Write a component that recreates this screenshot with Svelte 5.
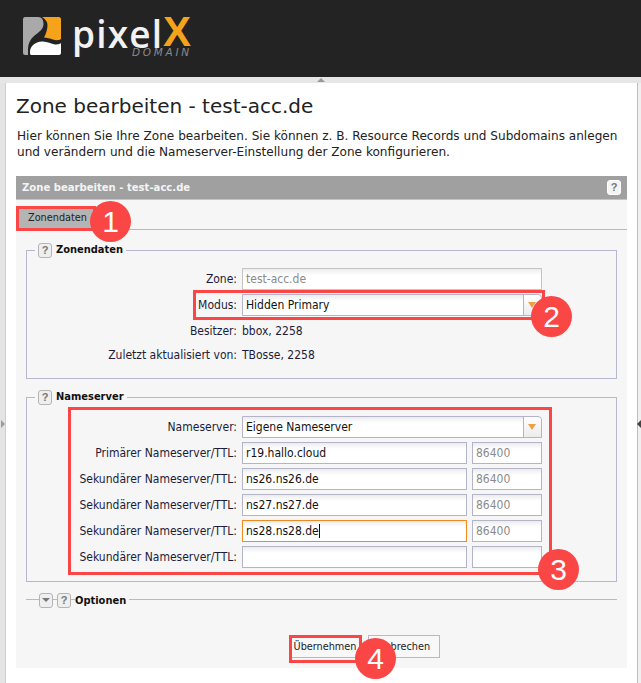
<script lang="ts">
  const secondary = [
    { host: 'ns26.ns26.de', ttl: '86400' },
    { host: 'ns27.ns27.de', ttl: '86400' },
    { host: 'ns28.ns28.de', ttl: '86400', focus: true },
    { host: '', ttl: '' }
  ];
</script>

<div class="page">
  <header class="topbar">
    <div class="logo">
      <svg class="logo-mark" width="38" height="38" viewBox="0 0 38 38" aria-hidden="true">
        <path d="M2 0H15C19 0 20.500 3 20.500 7C20.500 12 16 15 11 19C7 22.500 5 27 5 32V38H2C1 38 0 37 0 36V2C0 1 1 0 2 0Z" fill="#a9a9a9" />
        <path d="M19 0H36C37 0 38 1 38 2V22C36 23.500 33 23.500 30 22.500C27 21.500 24 20.500 21 20.500C23 17 24.500 12 24.500 8C24.500 4.500 22 2 19 0Z" fill="#f5a31a" />
        <path d="M8 38C7 37.500 7 36.500 7 35C7 29 12 25 19 24.500C24 24.200 28 27 32 27.500C34 27.700 36 27.200 38 26.200V36C38 37 37 38 36 38Z" fill="#ffffff" />
      </svg>
      <span class="logo-word">pixel</span>
      <span class="logo-x">X</span>
      <span class="logo-sub">DOMAIN</span>
    </div>
  </header>

  <div class="splitter"><i class="grip-top"></i></div>

  <div class="frame">
    <main class="content">
      <h1>Zone bearbeiten - test-acc.de</h1>
      <p class="intro">Hier können Sie Ihre Zone bearbeiten. Sie können z. B. Resource Records und Subdomains anlegen und verändern und die Nameserver-Einstellung der Zone konfigurieren.</p>

      <section class="panel">
        <div class="panel-head">
          <span>Zone bearbeiten - test-acc.de</span>
          <span class="help help-white">?</span>
        </div>
        <div class="panel-body">
          <div class="tabs"><span class="tab">Zonendaten</span></div>

          <fieldset class="group first">
            <legend><span class="help">?</span><b>Zonendaten</b></legend>
            <div class="row">
              <label>Zone:</label>
              <div class="field wide disabled">test-acc.de</div>
            </div>
            <div class="row">
              <label>Modus:</label>
              <div class="field wide select"><span>Hidden Primary</span><i class="arrow"></i></div>
            </div>
            <div class="row plain"><label>Besitzer:</label><span>bbox, 2258</span></div>
            <div class="row plain"><label>Zuletzt aktualisiert von:</label><span>TBosse, 2258</span></div>
          </fieldset>

          <fieldset class="group second">
            <legend><span class="help">?</span><b>Nameserver</b></legend>
            <div class="row">
              <label>Nameserver:</label>
              <div class="field wide select"><span>Eigene Nameserver</span><i class="arrow"></i></div>
            </div>
            <div class="row">
              <label>Primärer Nameserver/TTL:</label>
              <div class="field host">r19.hallo.cloud</div>
              <div class="field ttl">86400</div>
            </div>
            {#each secondary as ns}
              <div class="row">
                <label>Sekundärer Nameserver/TTL:</label>
                <div class="field host" class:focus={ns.focus}>{ns.host}{#if ns.focus}<i class="caret"></i>{/if}</div>
                <div class="field ttl">{ns.ttl}</div>
              </div>
            {/each}
          </fieldset>

          <div class="collapsed">
            <span class="help"><i class="down"></i></span>
            <span class="help">?</span>
            <b>Optionen</b>
          </div>

          <div class="actions">
            <button>Übernehmen</button>
            <button>Abbrechen</button>
          </div>
        </div>
      </section>
    </main>
  </div>

  <i class="grip left"></i>
  <i class="grip right"></i>

  <i class="mark m1"></i>
  <i class="mark m2"></i>
  <i class="mark m3"></i>
  <i class="mark m4"></i>
  <span class="badge b1">1</span>
  <span class="badge b2">2</span>
  <span class="badge b3">3</span>
  <span class="badge b4">4</span>
</div>

<style>
  :global(body) {
    background: #fff;
  }

  .page {
    position: relative;
    width: 641px;
    height: 683px;
    overflow: hidden;
    font-family: 'DejaVu Sans', sans-serif;
    color: #222;
  }

  .topbar {
    height: 77px;
    background: #232323;
    padding: 17px 0 0 23px;
    box-sizing: border-box;
  }

  .logo {
    position: relative;
    width: 180px;
    height: 40px;
  }

  .logo-mark {
    position: absolute;
    left: 0;
    top: 0;
  }

  .logo-word {
    position: absolute;
    left: 49px;
    top: 2px;
    font-family: 'Open Sans', sans-serif;
    font-size: 37px;
    font-weight: 600;
    line-height: 30px;
    letter-spacing: 1.2px;
    color: #f2f2f2;
  }

  .logo-x {
    position: absolute;
    left: 140px;
    top: -1px;
    font-family: 'Liberation Sans', sans-serif;
    font-weight: 700;
    font-size: 42px;
    line-height: 32px;
    color: #f5a31a;
  }

  .logo-sub {
    position: absolute;
    left: 109px;
    top: 31px;
    font-family: 'DejaVu Sans', sans-serif;
    font-style: italic;
    font-size: 10.5px;
    line-height: 8px;
    letter-spacing: 2.7px;
    color: #8a8a8a;
  }

  .splitter {
    height: 6px;
    background: #e6e6e6;
    display: flex;
    justify-content: center;
  }

  .grip-top {
    width: 0;
    height: 0;
    margin-top: 1px;
    border: 4px solid transparent;
    border-top: 0;
    border-bottom-color: #999;
  }

  .frame {
    margin-left: 5px;
    margin-right: 3px;
    border-left: 1px solid #cfcfcf;
    border-right: 1px solid #bdbdbd;
    height: 600px;
    box-shadow: -5px 0 0 #e4e4e4, 4px 0 0 #f0f0f0;
  }

  .content {
    padding: 0 10px;
  }

  .grip {
    position: absolute;
    top: 420px;
    width: 0;
    height: 0;
    border: 4px solid transparent;
  }

  .grip.left {
    left: 1px;
    border-right: 0;
    border-left-color: #999;
  }

  .grip.right {
    right: 0;
    border-left: 0;
    border-right-color: #444;
  }

  h1 {
    margin: 0;
    padding-top: 11px;
    font-size: 20px;
    line-height: 24px;
    font-weight: 400;
    color: #222;
  }

  .intro {
    margin: 10px 0 0 1px;
    font-size: 12.1px;
    line-height: 16px;
    color: #222;
  }

  .panel {
    margin-top: 16px;
  }

  .panel-head {
    height: 23px;
    background: #a0a0a0;
    color: #f4f4f4;
    font-family: 'DejaVu Sans Condensed', 'DejaVu Sans', sans-serif;
    font-size: 11.2px;
    font-weight: 700;
    display: flex;
    align-items: center;
    justify-content: space-between;
    padding: 0 6px;
    border-bottom: 1px solid #c4c4c4;
  }

  .panel-body {
    height: 468px;
    background: #f6f6f6;
    padding: 0 10px;
    font-family: 'DejaVu Sans Condensed', 'DejaVu Sans', sans-serif;
    font-size: 12px;
    position: relative;
  }

  .tabs {
    margin: 0 -10px;
    padding: 8px 0 0 3px;
    height: 21px;
    border-bottom: 1px solid #b8b8c4;
  }

  .tab {
    display: block;
    width: 76px;
    height: 20px;
    background: #b4b4b4;
    font-size: 10.8px;
    line-height: 20px;
    text-indent: 9px;
  }

  .group {
    margin: 0;
    padding: 0;
    border: 1px solid #b8b8cc;
    box-sizing: border-box;
    min-width: 0;
  }

  .first {
    margin-top: 11px;
    height: 138px;
    padding-top: 9px;
  }

  .second {
    margin-top: 9px;
    height: 194px;
    padding-top: 10px;
  }

  legend {
    margin-left: 8px;
    padding: 0 3px;
    font-size: 11px;
    line-height: 18px;
    display: flex;
    align-items: center;
    gap: 4px;
  }

  legend b,
  .collapsed b {
    font-weight: 700;
    color: #111;
  }

  .help {
    display: inline-flex;
    align-items: center;
    justify-content: center;
    width: 14px;
    height: 15px;
    box-sizing: border-box;
    border: 1px solid #b4b4b4;
    border-radius: 3px;
    background: #efefef;
    color: #777;
    font-family: 'Liberation Sans', sans-serif;
    font-size: 11px;
    font-weight: 700;
    line-height: 1;
  }

  .help-white {
    background: #f4f4f4;
    border-color: #fff;
  }

  .down {
    width: 0;
    height: 0;
    border: 4px solid transparent;
    border-bottom: 0;
    border-top-color: #777;
  }

  .row {
    display: flex;
    align-items: center;
    height: 22px;
    margin-bottom: 4px;
    padding-left: 42px;
    color: #1c1c3a;
  }

  .row label {
    width: 168px;
    flex: none;
    margin-right: 5px;
    text-align: right;
  }

  .row.plain {
    height: 22px;
    margin-bottom: 2px;
  }

  .field {
    height: 22px;
    box-sizing: border-box;
    border: 1px solid #b4b4c8;
    background: linear-gradient(#ececf0, #fff 6px);
    color: #111;
    padding: 0 3px;
    line-height: 20px;
    position: relative;
    white-space: nowrap;
  }

  .wide {
    width: 300px;
  }

  .host {
    width: 225px;
    margin-right: 5px;
  }

  .ttl {
    width: 70px;
    color: #8a8a8a;
  }

  .disabled {
    color: #8a8a8a;
    border-color: #c4c4c4;
  }

  .focus {
    border-color: #f08a1c;
  }

  .caret {
    display: inline-block;
    width: 1px;
    height: 14px;
    background: #111;
    vertical-align: -3px;
  }

  .select {
    border-top-right-radius: 4px;
  }

  .arrow {
    position: absolute;
    top: 0;
    right: 0;
    width: 17px;
    height: 20px;
    border-left: 1px solid #b4b4c8;
    background: linear-gradient(#fff, #ececec);
    border-top-right-radius: 4px;
  }

  .arrow::after {
    content: '';
    position: absolute;
    left: 4px;
    top: 7px;
    border: 4.500px solid transparent;
    border-bottom: 0;
    border-top: 6px solid #eda04a;
  }

  .collapsed {
    margin-top: 8px;
    height: 20px;
    display: flex;
    align-items: center;
    gap: 4px;
    position: relative;
    padding-left: 13px;
    font-size: 11px;
  }

  .collapsed::before {
    content: '';
    position: absolute;
    left: 0;
    right: 0;
    top: 9px;
    border-top: 1px solid #b8b8cc;
  }

  .collapsed > * {
    position: relative;
    z-index: 1;
  }

  .collapsed b {
    background: #f6f6f6;
    padding-right: 3px;
  }

  .actions {
    margin-top: 25px;
    margin-left: 263px;
    display: flex;
    gap: 7px;
  }

  button {
    width: 72px;
    height: 23px;
    padding: 0;
    border: 1px solid #b8b8cc;
    background: #f8f8f8;
    font-family: 'DejaVu Sans Condensed', 'DejaVu Sans', sans-serif;
    font-size: 10.8px;
    color: #222;
  }

  .mark {
    position: absolute;
    box-sizing: border-box;
    border: 3px solid #fb4646;
  }

  .m1 { left: 16px; top: 206px; width: 80px; height: 25px; }
  .m2 { left: 193px; top: 290px; width: 352px; height: 30px; }
  .m3 { left: 68px; top: 407px; width: 484px; height: 168px; }
  .m4 { left: 289px; top: 635px; width: 73px; height: 28px; }

  .badge {
    position: absolute;
    width: 41px;
    height: 41px;
    border-radius: 50%;
    background: #fb4646;
    color: #fff;
    font-family: 'Liberation Sans', sans-serif;
    font-size: 30px;
    line-height: 41px;
    text-align: center;
  }

  .b1 { left: 90px; top: 201px; }
  .b2 { left: 531px; top: 296px; }
  .b3 { left: 538px; top: 549px; }
  .b4 { left: 355px; top: 638px; }
</style>
